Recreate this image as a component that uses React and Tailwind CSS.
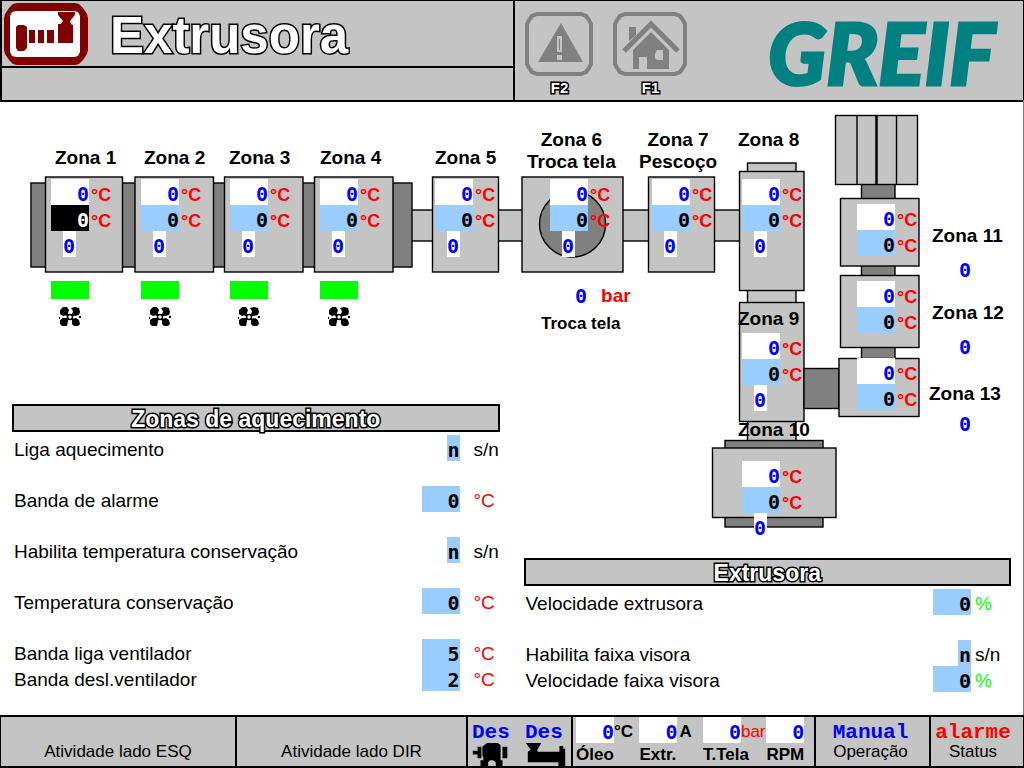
import clsx from "clsx";

const OUTLINED = "font-bold text-white [-webkit-text-stroke:3px_black] [paint-order:stroke_fill]";
const DIGITS = "font-['DejaVu_Sans_Mono',monospace] text-[20px] leading-[30px] font-bold";
const MONO = "font-['Liberation_Mono',monospace] text-[21px] leading-5 font-bold";

const zones = [
    { id: 1, name: "Zona 1", label: "left-[55px] top-[47px]", box: "left-[51px] top-[79px]", active: true, output: true },
    { id: 2, name: "Zona 2", label: "left-[144px] top-[47px]", box: "left-[141px] top-[79px]", output: true },
    { id: 3, name: "Zona 3", label: "left-[229px] top-[47px]", box: "left-[230px] top-[79px]", output: true },
    { id: 4, name: "Zona 4", label: "left-[320px] top-[47px]", box: "left-[320px] top-[79px]", output: true },
    { id: 5, name: "Zona 5", label: "left-[435px] top-[47px]", box: "left-[435px] top-[79px]", output: true },
    { id: 6, name: "Zona 6", extra: "Troca tela", label: "left-[527px] top-[29px]", box: "left-[550px] top-[79px]", output: true },
    { id: 7, name: "Zona 7", extra: "Pescoço", label: "left-[639px] top-[29px]", box: "left-[652px] top-[79px]", output: true },
    { id: 8, name: "Zona 8", label: "left-[738px] top-[29px]", box: "left-[742px] top-[79px]", output: true },
    { id: 9, name: "Zona 9", label: "left-[738px] top-[208px]", box: "left-[742px] top-[233px]", output: true },
    { id: 10, name: "Zona 10", label: "left-[738px] top-[319px]", box: "left-[742px] top-[361px]", output: true },
    { id: 11, name: "Zona 11", label: "left-[932px] top-[125px]", box: "left-[857px] top-[104px]", side: "left-[959px] top-[155px]" },
    { id: 12, name: "Zona 12", label: "left-[932px] top-[202px]", box: "left-[857px] top-[181px]", side: "left-[959px] top-[232px]" },
    { id: 13, name: "Zona 13", label: "left-[929px] top-[283px]", box: "left-[857px] top-[258px]", side: "left-[959px] top-[309px]" },
];

const coolers = [
    { id: 1, pos: "left-[51px] top-[181px]" },
    { id: 2, pos: "left-[141px] top-[181px]" },
    { id: 3, pos: "left-[230px] top-[181px]" },
    { id: 4, pos: "left-[320px] top-[181px]" },
];

const readings = [
    { label: "Óleo", unit: "°C", unitClass: "font-bold" },
    { label: "Extr.", unit: "A", unitClass: "font-bold pl-0.5" },
    { label: "T.Tela", unit: "bar", unitClass: "text-[#ff0000]" },
    { label: "RPM", unit: "", unitClass: "" },
];

function ExtruderIcon() {
    return (
        <svg viewBox="0 0 84 62" className="h-[62px] w-[84px] shrink-0" aria-hidden="true">
            <path d="M13 0H71L75 1L79 5L83 11L84 15V47L83 51L79 57L75 61L71 62H13L9 61L5 57L1 51L0 47V15L1 11L5 5L9 1Z" fill="#800000" />
            <path d="M12 8H70L74 9L76 13V49L74 53L70 54H12L8 53L6 49V13L8 9Z" fill="#fff" />
            <g fill="#800000">
                <path d="M14 22H20L23 24V45L20 48H14L12 45V24Z" />
                <path d="M25 27H31V40H25ZM34 27H40V40H34ZM43 27H50V40H43Z" />
                <path d="M54 21H57L59 18L54 12V9H71V12L66 18L67 21L69 22V40H54Z" />
            </g>
        </svg>
    );
}

function AlarmIcon() {
    return (
        <svg viewBox="0 0 68 64" className="h-[64px] w-[68px]" aria-hidden="true">
            <path d="M12 2H56L61 4L64 8L66 12V52L64 56L61 60L56 62H12L7 60L4 56L2 52V12L4 8L7 4Z" fill="none" stroke="#808080" strokeWidth="4" />
            <path d="M36 11L58 50H13Z" fill="#808080" />
            <path d="M32 24H37V40H32ZM32 43H37V48H32Z" fill="#c4c4c4" />
            <path d="M34 27H35V38H34Z" fill="#808080" />
        </svg>
    );
}

function HomeIcon() {
    return (
        <svg viewBox="0 0 74 64" className="h-[64px] w-[74px]" aria-hidden="true">
            <path d="M12 2H62L67 4L70 8L72 12V52L70 56L67 60L62 62H12L7 60L4 56L2 52V12L4 8L7 4Z" fill="none" stroke="#808080" strokeWidth="4" />
            <path d="M11 39L38 12L65 39" fill="none" stroke="#808080" strokeWidth="5" />
            <path d="M16 15H23V23L16 29Z" fill="#808080" />
            <path d="M38 20L56 38V57H20V38Z" fill="#808080" />
            <path d="M26 45H34V57H26ZM44 38H50V48H44L42 46V42Z" fill="#c4c4c4" />
        </svg>
    );
}

function FanIcon() {
    return (
        <svg viewBox="0 0 22 20" className="h-[20px] w-[22px]" aria-hidden="true">
            <path d="M1 3L4 0H8L10 3L9 6L8 8L4 9L1 7ZM12 1L16 0L20 1L21 5L20 8L16 9L13 8L14 4ZM1 13L4 11L8 11L9 14L8 19H3L1 17ZM13 12L17 11L20 13L21 17L19 19H15L13 17Z" />
            <circle cx="11" cy="10" r="2.5" fill="none" stroke="#000" strokeWidth="1.5" />
            <path d="M7 7L9 9M15 7L13 9M13 12L15 14M9 12L7 14M21 9V11M0 10V12" stroke="#000" strokeWidth="2" />
        </svg>
    );
}

function MotorIcon() {
    return (
        <svg viewBox="0 0 38 24" className="h-[24px] w-[38px]" aria-hidden="true">
            <path d="M12 2L15 0H26L29 2V18H31V24H24V20L21 18H18L16 20V24H8V18H11V14H10V4ZM5 4H9V16H5V12H0V8H5ZM31 4H36V16H31Z" />
        </svg>
    );
}

function ScrewIcon() {
    return (
        <svg viewBox="0 0 42 24" className="h-[24px] w-[42px]" aria-hidden="true">
            <path d="M0 0H16L12 7V9H35V3H39V6H41V24H34V20H2V9L5 7Z" />
        </svg>
    );
}

// Machine outline, seen from the side
function MachineDrawing() {
    return (
        <svg width="1024" height="440" viewBox="0 0 1024 440" className="block max-w-none" aria-hidden="true">
            <g fill="#c4c4c4" stroke="#000" strokeWidth="1.4">
                <rect x="400" y="110" width="345" height="31" />
                <rect x="31" y="83" width="381" height="84" fill="#808080" />
                <rect x="45.5" y="77" width="77" height="95" />
                <rect x="135" y="77" width="78.5" height="95" />
                <rect x="224.5" y="77" width="78.5" height="95" />
                <rect x="314.5" y="77" width="78.5" height="95" />
                <rect x="432.5" y="77" width="66" height="95" />
                <rect x="522" y="77" width="101" height="95" />
                <circle cx="572.5" cy="124" r="33" fill="#808080" />
                <rect x="648.5" y="77" width="66" height="95" />
                <rect x="747.5" y="63" width="48.5" height="9" />
                <rect x="747.5" y="190" width="48.5" height="13" />
                <rect x="739.5" y="71.5" width="64.5" height="119" />
                <rect x="747.5" y="320" width="48.5" height="21" />
                <rect x="739.5" y="202.5" width="64.5" height="119" />
                <rect x="725" y="340.5" width="98" height="86.5" fill="#808080" />
                <rect x="712.5" y="348" width="123.5" height="69.5" />
                <rect x="804" y="268.5" width="35" height="40" fill="#808080" />
                <rect x="861.5" y="84" width="33.5" height="180" fill="#808080" />
                <rect x="835.5" y="15.5" width="82" height="69" />
                <path d="M857 15.5V84.5M896.5 15.5V84.5" />
                <path d="M876.5 15.5V84.5" strokeWidth="2.5" />
                <rect x="840.5" y="98.5" width="78.5" height="67.5" />
                <rect x="840.5" y="175.5" width="78.5" height="72" />
                <rect x="839" y="258.5" width="80" height="58" />
            </g>
        </svg>
    );
}

function Degrees() {
    return <span className="h-[26px] text-[18px] leading-[32px] font-bold text-[#ff0000]">°C</span>;
}

function Zone({ zone }) {
    const inputId = `zona-${zone.id}`;

    return (
        <>
            <label
                htmlFor={inputId}
                className={clsx("absolute text-center text-[19px] leading-[22px] font-bold whitespace-nowrap", zone.label)}
            >
                {zone.name}
                {zone.extra && <span className="block">{zone.extra}</span>}
            </label>

            <div className={clsx("absolute", zone.box)}>
                <div className="flex gap-0.5">
                    <output className={clsx("block h-[26px] w-[38px] bg-white text-right text-[#0000ff]", DIGITS)}>0</output>
                    <Degrees />
                </div>
                <div className="flex gap-0.5">
                    <input
                        id={inputId}
                        defaultValue="0"
                        className={clsx(
                            "h-[26px] w-[38px] p-0 pt-1 text-right outline-none",
                            DIGITS,
                            zone.active ? "bg-black text-white" : "bg-[#99ccff] text-black"
                        )}
                    />
                    <Degrees />
                </div>
                {zone.output && (
                    <output className={clsx("ml-3 block h-[26px] w-[13px] bg-white text-[#0000ff]", DIGITS)}>0</output>
                )}
            </div>

            {zone.side && (
                <output className={clsx("absolute text-[#0000ff]", DIGITS, zone.side)}>0</output>
            )}
        </>
    );
}

function Diagram() {
    return (
        <section className="relative col-span-2 col-start-1 row-span-2 row-start-1" aria-label="Zonas">
            <MachineDrawing />

            {zones.map((zone) => (
                <Zone key={zone.id} zone={zone} />
            ))}

            {coolers.map((c) => (
                <div key={c.id} className={clsx("absolute flex w-[38px] flex-col items-center gap-2", c.pos)}>
                    <div className="h-[18px] w-full bg-[#00ff00]" />
                    <FanIcon />
                </div>
            ))}

            <div className="absolute top-[181px] left-[541px]">
                <div className="flex items-center gap-3.5 pl-[34px]">
                    <output className={clsx("text-[#0000ff]", DIGITS)}>0</output>
                    <span className="text-[19px] leading-[30px] font-bold text-[#ff0000]">bar</span>
                </div>
                <p className="text-[17px] leading-[26px] font-bold">Troca tela</p>
            </div>
        </section>
    );
}

function PanelTitle({ children }) {
    return (
        <h2 className="flex h-7 items-center justify-center border-2 border-black bg-[#c4c4c4]">
            <span className={clsx("pt-0.5 text-[23px] leading-6", OUTLINED)}>{children}</span>
        </h2>
    );
}

function Field({ id, label, value, unit, unitClass, gap }) {
    return (
        <div className="flex h-[26px]">
            <label htmlFor={id} className="flex-1 pl-0.5 text-[19px] leading-[30px] whitespace-nowrap">
                {label}
            </label>
            <input
                id={id}
                defaultValue={value}
                className={clsx(
                    "h-[26px] bg-[#99ccff] p-0 pt-1 text-right outline-none",
                    DIGITS,
                    value === "n" ? "w-[13px]" : "w-[38px]"
                )}
            />
            <span className={clsx("w-10 text-[19px] leading-[30px]", gap, unitClass)}>{unit}</span>
        </div>
    );
}

function HeatingPanel() {
    return (
        <section className="col-start-1 row-span-2 row-start-2 px-3">
            <PanelTitle>Zonas de aquecimento</PanelTitle>
            <div className="flex flex-col gap-[25px] pt-[3px]">
                <Field id="liga" label="Liga aquecimento" value="n" unit="s/n" gap="pl-3.5" />
                <Field id="alarme" label="Banda de alarme" value="0" unit="°C" unitClass="text-[#ff0000]" gap="pl-3.5" />
                <Field id="habilita" label="Habilita temperatura conservação" value="n" unit="s/n" gap="pl-3.5" />
                <Field id="conservacao" label="Temperatura conservação" value="0" unit="°C" unitClass="text-[#ff0000]" gap="pl-3.5" />
                <div>
                    <Field id="liga-vent" label="Banda liga ventilador" value="5" unit="°C" unitClass="text-[#ff0000]" gap="pl-3.5" />
                    <Field id="desl-vent" label="Banda desl.ventilador" value="2" unit="°C" unitClass="text-[#ff0000]" gap="pl-3.5" />
                </div>
            </div>
        </section>
    );
}

function ExtruderPanel() {
    return (
        <section className="col-start-2 row-start-3 px-3">
            <PanelTitle>Extrusora</PanelTitle>
            <div className="flex flex-col gap-[25px] pt-[3px]">
                <Field id="vel" label="Velocidade extrusora" value="0" unit="%" unitClass="text-[#00ff00]" gap="pl-1" />
                <div>
                    <Field id="faixa" label="Habilita faixa visora" value="n" unit="s/n" gap="pl-1" />
                    <Field id="vel-faixa" label="Velocidade faixa visora" value="0" unit="%" unitClass="text-[#00ff00]" gap="pl-1" />
                </div>
            </div>
        </section>
    );
}

function Header() {
    return (
        <header className="grid h-[100px] grid-cols-[516fr_508fr] border-t border-r border-black bg-[#c4c4c4]">
            <div className="flex flex-col border-x-2 border-b-2 border-black">
                <div className="flex h-[67px] items-center gap-[22px] border-b-2 border-black pl-0.5">
                    <ExtruderIcon />
                    <h1 className={clsx("pt-1 text-[51px] leading-[60px]", OUTLINED)}>Extrusora</h1>
                </div>
            </div>

            <div className="flex items-start justify-between border-b-2 border-black pt-[11px] pr-7 pl-2.5">
                <nav className="flex gap-5">
                    <button type="button" className="flex flex-col items-center">
                        <AlarmIcon />
                        <span className={clsx("text-[15px] leading-6", OUTLINED)}>F2</span>
                    </button>
                    <button type="button" className="flex flex-col items-center">
                        <HomeIcon />
                        <span className={clsx("text-[15px] leading-6", OUTLINED)}>F1</span>
                    </button>
                </nav>
                <div className="font-[Lato,sans-serif] text-[86px] leading-[80px] font-black text-[#008080] italic [-webkit-text-stroke:3px_#008080]">
                    GREIF
                </div>
            </div>
        </header>
    );
}

function Footer() {
    return (
        <footer className="grid h-[53px] grid-cols-[236fr_231fr_105fr_243fr_115fr_92fr] border-2 border-r border-l border-black bg-[#c4c4c4] text-[17px] leading-5">
            <button type="button" className="flex items-end justify-center border-r-2 border-black pb-1">
                Atividade lado ESQ
            </button>
            <button type="button" className="flex items-end justify-center border-r-2 border-black pb-1">
                Atividade lado DIR
            </button>
            <div className="flex min-w-0 justify-between overflow-hidden border-r-2 border-black px-1 pt-1.5">
                <div className="flex flex-col">
                    <span className={clsx("text-[#0000ff]", MONO)}>Des</span>
                    <MotorIcon />
                </div>
                <div className="flex flex-col">
                    <span className={clsx("text-[#0000ff]", MONO)}>Des</span>
                    <ScrewIcon />
                </div>
            </div>
            <div className="grid min-w-0 grid-cols-[64fr_64fr_64fr_48fr] border-r-2 border-black pl-[3px]">
                {readings.map((r) => (
                    <div key={r.label} className="min-w-0">
                        <div className="flex h-7">
                            <output className={clsx("block h-[26px] w-[38px] shrink-0 bg-white text-right text-[#0000ff]", DIGITS)}>
                                0
                            </output>
                            <span className={clsx("leading-[30px]", r.unitClass)}>{r.unit}</span>
                        </div>
                        <div className="font-bold">{r.label}</div>
                    </div>
                ))}
            </div>
            <div className="flex min-w-0 flex-col items-center border-r-2 border-black pt-1.5 pr-1">
                <span className={clsx("text-[#0000ff]", MONO)}>Manual</span>
                <span className="leading-[18px]">Operação</span>
            </div>
            <div className="flex min-w-0 flex-col items-center pt-1.5 pr-2">
                <span className={clsx("text-[#ff0000]", MONO)}>alarme</span>
                <span className="leading-[18px]">Status</span>
            </div>
        </footer>
    );
}

export default function App() {
    return (
        <div className="flex min-h-screen flex-col bg-white font-['Liberation_Sans',Arial,sans-serif] text-black">
            <Header />
            <main className="grid flex-1 grid-cols-2 grid-rows-[304px_154px_auto] border-r border-[#808080]">
                <Diagram />
                <HeatingPanel />
                <ExtruderPanel />
            </main>
            <Footer />
        </div>
    );
}
